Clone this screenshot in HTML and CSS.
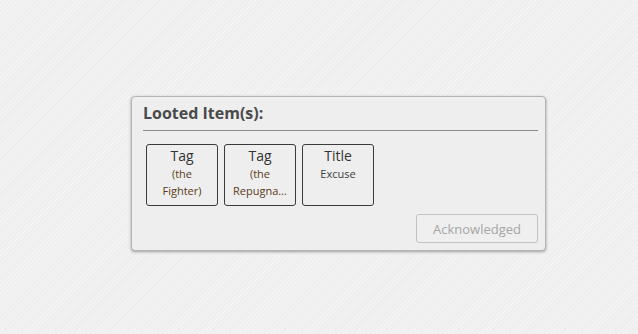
FILE: index.html
```html
<html>

<head>
    <link rel="stylesheet" href="styles.css">
</head>

<body>
<div class="loot">
    <h2>Looted Item(s):</h2>
    <div class="items">
        <div class="item">
            <div class="kind">Tag</div>
            <div class="name tag">(the Fighter)</div>
        </div>
        <div class="item">
            <div class="kind">Tag</div>
            <div class="name tag">(the Repugna…</div>
        </div>
        <div class="item">
            <div class="kind">Title</div>
            <div class="name">Excuse</div>
        </div>
    </div>
    <div class="actions">
        <button disabled>Acknowledged</button>
    </div>
</div>
</body>

</html>
```

FILE: styles.css
```css
html, body {
    margin: 0;
    height: 100%;
}

body {
    font-family: "Open Sans", "Noto Sans", sans-serif;
    background-color: #f0f0f0;
    background-image: repeating-linear-gradient(135deg, #f2f2f2 0px, #f2f2f2 2px, #ededed 2px, #ededed 3px);
    padding: 96px 0 0 131px;
    box-sizing: border-box;
}

.loot {
    width: 415px;
    height: 155px;
    box-sizing: border-box;
    background: #eeeeee;
    border: 1px solid #b4b4b4;
    border-radius: 4px;
    box-shadow: 0 1px 3px rgba(0, 0, 0, 0.35);
    padding: 5px 7px 0 11px;
}

.loot h2 {
    margin: 0;
    font-size: 16px;
    font-weight: 700;
    color: #4a4a4a;
    line-height: 23px;
    padding-bottom: 5px;
    border-bottom: 1px solid #8a8a8a;
}

.items {
    display: flex;
    gap: 6px;
    padding: 13px 0 0 3px;
}

.item {
    width: 72px;
    height: 62px;
    box-sizing: border-box;
    border: 1px solid #3a3a3a;
    border-radius: 3px;
    text-align: center;
    padding: 2px 7px 0;
    overflow: hidden;
}

.kind {
    font-size: 14px;
    line-height: 18px;
    color: #333;
}

.name {
    font-size: 11px;
    line-height: 17px;
    color: #404040;
}

.name.tag {
    color: #5a3a20;
}

.actions {
    display: flex;
    justify-content: flex-end;
    padding-top: 8px;
}

.actions button {
    font-family: "Open Sans", "Noto Sans", sans-serif;
    font-size: 13px;
    width: 122px;
    height: 29px;
    background: #efefef;
    color: #a6a6a6;
    border: 1px solid #c2c2c2;
    border-radius: 3px;
    padding: 0;
}
```
